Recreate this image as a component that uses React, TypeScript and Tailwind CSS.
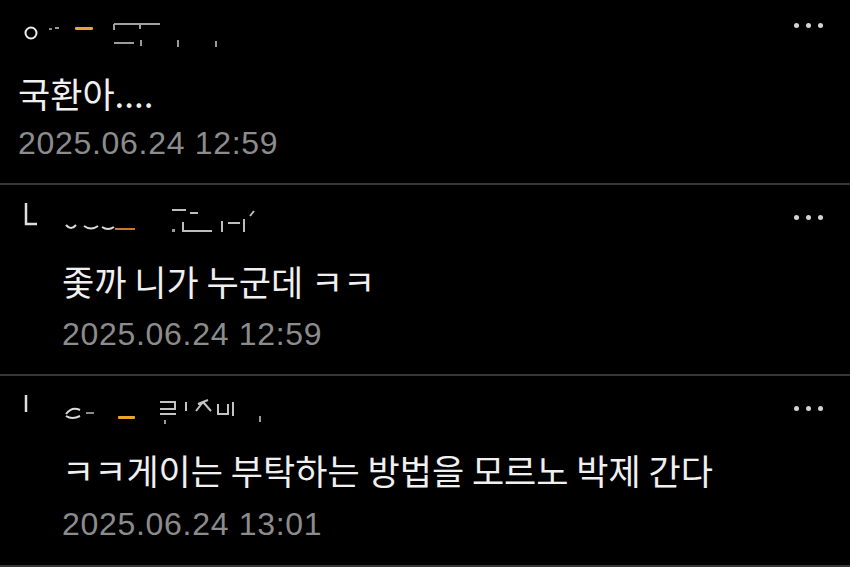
function Dots() {
  return (
    <div className="flex items-center gap-[7px] pr-[27px]">
      <span className="w-[5px] h-[5px] rounded-full bg-[#d4d4d4]" />
      <span className="w-[5px] h-[5px] rounded-full bg-[#d4d4d4]" />
      <span className="w-[5px] h-[5px] rounded-full bg-[#d4d4d4]" />
    </div>
  );
}

function NameTop() {
  return (
    <svg width="280" height="50" viewBox="0 0 280 50">
      <circle cx="31" cy="33" r="5.5" fill="none" stroke="#ececec" strokeWidth="2" />
      <rect x="49" y="28" width="3" height="2" fill="#8a8a8a" />
      <rect x="55" y="27" width="4" height="2" fill="#9a9a9a" />
      <rect x="75" y="27" width="18" height="3" rx="1" fill="#f0a32a" />
      <path d="M114 24 H160 M114 24 V30 M140 24 V29" stroke="#a0a0a0" strokeWidth="2" fill="none" />
      <path d="M114 43 H134 M141 40 V46 M178 40 V47 M216 41 V47" stroke="#9a9a9a" strokeWidth="2" fill="none" />
    </svg>
  );
}

function NameReply() {
  return (
    <svg width="280" height="50" viewBox="0 0 280 50">
      <path d="M26 18 V39 H37" stroke="#dedede" strokeWidth="2.5" fill="none" />
      <path d="M66 40 Q71 46 76 40 M84 41 Q91 46 98 41 M102 42 Q108 46 114 42" stroke="#dcdcdc" strokeWidth="2" fill="none" />
      <rect x="115" y="43" width="20" height="2" fill="#c8782a" />
      <path d="M172 25 H186 M190 28 H198 M183 37 V46 H212 M222 36 V47 M228 38 H240 M244 34 V47 M250 31 L254 26" stroke="#bdbdbd" strokeWidth="2" fill="none" />
      <rect x="172" y="44" width="3" height="3" fill="#9a9a9a" />
    </svg>
  );
}

function NameReply2() {
  return (
    <svg width="280" height="50" viewBox="0 0 280 50">
      <path d="M26 19 V36" stroke="#dedede" strokeWidth="2.5" fill="none" />
      <path d="M66 38 Q72 30 80 34 M66 40 Q72 44 80 40" stroke="#dcdcdc" strokeWidth="2" fill="none" />
      <rect x="86" y="36" width="8" height="2" fill="#8a8a8a" />
      <rect x="118" y="40" width="17" height="3" rx="1" fill="#f0a32a" />
      <path d="M160 26 H175 V33 H160 M160 38 H176 M186 26 V35 M198 28 L208 24 M203 26 L196 35 M203 26 L211 35 M218 28 V38 H228 V28 M233 26 V40" stroke="#c4c4c4" strokeWidth="2" fill="none" />
      <rect x="164" y="44" width="2" height="4" fill="#9a9a9a" />
      <rect x="259" y="40" width="2" height="6" fill="#9a9a9a" />
    </svg>
  );
}

const body = "text-[35px] leading-[44px] text-[#f0f0f0] font-['Noto_Sans_CJK_KR',sans-serif]";
const date = "text-[32px] leading-[40px] text-[#8c8c8c] font-['Liberation_Sans','Noto_Sans_CJK_KR',sans-serif] tracking-[0.7px]";

export default function App() {
  return (
    <div className="w-[850px] h-[567px] bg-black overflow-hidden">
      {/* comment 1 */}
      <div className="flex flex-col pb-[20px] border-b-2 border-[#363636]">
        <div className="flex justify-between items-start h-[71px]">
          <NameTop />
          <div className="pt-[23px]">
            <Dots />
          </div>
        </div>
        <div className={`${body} pl-[18px]`}>국환아....</div>
        <div className={`${date} pl-[18px] mt-[8px]`}>2025.06.24 12:59</div>
      </div>

      {/* reply 1 */}
      <div className="flex flex-col pb-[20px] border-b-2 border-[#363636]">
        <div className="flex justify-between items-start h-[74px]">
          <NameReply />
          <div className="pt-[30px]">
            <Dots />
          </div>
        </div>
        <div className={`${body} pl-[62px]`}>좇까 니가 누군데 ㅋㅋ</div>
        <div className={`${date} pl-[62px] mt-[11px]`}>2025.06.24 12:59</div>
      </div>

      {/* reply 2 */}
      <div className="flex flex-col pb-[21px] border-b-2 border-[#363636]">
        <div className="flex justify-between items-start h-[72px]">
          <NameReply2 />
          <div className="pt-[30px]">
            <Dots />
          </div>
        </div>
        <div className={`${body} pl-[62px]`}>ㅋㅋ게이는 부탁하는 방법을 모르노 박제 간다</div>
        <div className={`${date} pl-[62px] mt-[12px]`}>2025.06.24 13:01</div>
      </div>
    </div>
  );
}
